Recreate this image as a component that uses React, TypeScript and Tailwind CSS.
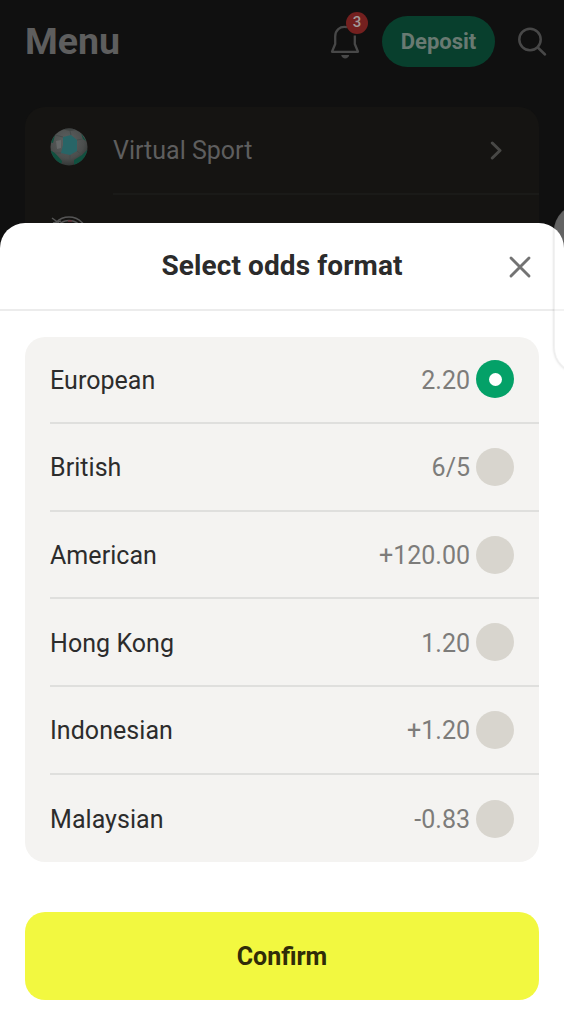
import { useState } from "react";

const formats = [
  { name: "European", sample: "2.20" },
  { name: "British", sample: "6/5" },
  { name: "American", sample: "+120.00" },
  { name: "Hong Kong", sample: "1.20" },
  { name: "Indonesian", sample: "+1.20" },
  { name: "Malaysian", sample: "-0.83" },
];

function Bell() {
  return (
    <svg className="block h-[36px] w-[32px]" viewBox="0 0 32 36" fill="none" stroke="#484848" strokeWidth="2.3">
      <path d="M18 3.2C10.500 1.800 6.200 6.400 6.200 12.500V20L3 27.800H29L25.800 20V11.500" strokeLinejoin="round" />
      <path d="M12.200 31H20.200C19.500 35.600 12.900 35.600 12.200 31Z" fill="#484848" stroke="none" />
    </svg>
  );
}

function Ball() {
  return (
    <svg className="block size-[38px]" viewBox="0 0 38 38">
      <defs>
        <radialGradient id="shell" cx=".45" cy=".35" r=".65">
          <stop offset="0" stopColor="#5d6060" />
          <stop offset=".7" stopColor="#4b4e4d" />
          <stop offset="1" stopColor="#343837" />
        </radialGradient>
        <clipPath id="round"><circle cx="19" cy="19" r="18.500" /></clipPath>
      </defs>
      <circle cx="19" cy="19" r="18.500" fill="url(#shell)" />
      <g clipPath="url(#round)">
        <path d="M13 9L21 7L27 12L27 23L20 27L11 25L13 17Z" fill="#286567" />
        <path d="M0 22L5 25L12 33L11 38H0ZM38 21L32 27L24 32V38H38ZM0 14L5 7L3 15ZM31 5L36 13L33 11Z" fill="#10503f" />
        <path d="M11 1L20 3L27 2L21 0Z" fill="#404443" />
        <path d="M21 7L20 3M27 12L33 11M27 23L32 27M20 27V32M11 25L5 25M13 9L5 7" stroke="#454b4a" strokeWidth="1" />
        <path d="M6 13L11 12L11 20L7 21Z" fill="#656868" />
      </g>
    </svg>
  );
}

export default function App() {
  const [selected, setSelected] = useState("European");
  return (
    <div className="relative flex h-[1024px] w-[564px] flex-col overflow-hidden bg-[#101010] font-['Roboto',sans-serif]">
      <header className="flex h-[107px] shrink-0 items-start pl-[25px] pr-[17px] text-[#5e5e5e]">
        <h1 className="mt-[18px] text-[37.500px] font-bold leading-[46px]">Menu</h1>
        <div className="ml-auto flex items-center pt-4">
          <div className="relative mr-[21px]">
            <Bell />
            <span className="absolute -top-[12px] left-[17px] flex size-[22px] items-center justify-center rounded-full bg-[#74201f] text-[15px] font-medium leading-none text-[#a29a9a]">3</span>
          </div>
          <button className="h-[51px] w-[113px] rounded-full bg-[#083f2d] text-[22px] font-bold text-[#697a72]">Deposit</button>
          <svg className="ml-[22px] block size-[30px]" viewBox="0 0 30 30" fill="none" stroke="#484848" strokeWidth="2.500" strokeLinecap="round">
            <circle cx="13" cy="12.500" r="10.700" />
            <path d="M20.800 20.500L28 27.500" />
          </svg>
        </div>
      </header>

      <section className="mx-[25px] h-[116px] shrink-0 overflow-hidden rounded-t-[20px] bg-[#151412]">
        <div className="flex h-[88px] items-center pl-[25px]">
          <div className="-mt-[8px]"><Ball /></div>
          <div className="ml-[25px] flex h-full flex-1 items-center border-b-2 border-[#1a1a18] pr-[36px]">
            <span className="pt-px text-[25px] text-[#5e5e5e]">Virtual Sport</span>
            <svg className="ml-auto block h-[19px] w-[13px]" viewBox="0 0 13 19" fill="none" stroke="#484846" strokeWidth="3" strokeLinecap="round" strokeLinejoin="round">
              <path d="M2.300 2L10 9.500L2.300 17" />
            </svg>
          </div>
        </div>
        <svg className="ml-[25px] mt-[21px] block h-[38px] w-[38px]" viewBox="0 0 38 38" fill="none" stroke="#555" strokeWidth="1.500">
          <circle cx="19" cy="19" r="18" />
          <circle cx="19" cy="19" r="14.500" />
          <path d="M2 2L9 7M3 7L11 5" />
          <path d="M18 5H22" stroke="#67333b" />
        </svg>
      </section>

      <main className="flex flex-1 flex-col rounded-t-[25px] bg-white">
        <div className="grid h-[88px] shrink-0 grid-cols-[82px_1fr_82px] items-center border-b-2 border-[#ececec]">
          <h2 className="col-start-2 whitespace-nowrap text-center text-[28px] font-bold tracking-[0.1px] text-[#2b2b2b]">Select odds format</h2>
          <button aria-label="Close" className="ml-[26px] mt-[2px] flex size-[24px] items-center justify-center">
            <svg className="size-[24px]" viewBox="0 0 24 24" stroke="#737373" strokeWidth="2.900" strokeLinecap="round">
              <path d="M3 3L21 21M21 3L3 21" />
            </svg>
          </button>
        </div>

        <div className="mx-[25px] mt-[26px] h-[525px] shrink-0 rounded-[20px] bg-[#f4f3f1] pl-[25px]">
          {formats.map((format) => (
            <button
              key={format.name}
              onClick={() => setSelected(format.name)}
              className="flex h-[87.800px] w-full items-center border-b-2 border-[#dfdfdd] pr-[25px] text-left text-[25px] first:h-[86.900px] last:border-b-0"
            >
              <span className="pt-[2px] tracking-[0.05px] text-[#2c2c2c]">{format.name}</span>
              <span className="ml-auto pt-[2px] text-[#7d7c7a]">{format.sample}</span>
              <span className={selected === format.name ? "ml-[6px] flex size-[38px] items-center justify-center rounded-full bg-[#04a168]" : "ml-[6px] flex size-[38px] items-center justify-center rounded-full bg-[#d8d5ce]"}>
                {selected === format.name && <span className="size-[13px] rounded-full bg-white" />}
              </span>
            </button>
          ))}
        </div>

        <button className="mx-[25px] mt-[50.400px] h-[87.600px] shrink-0 rounded-[20px] bg-[#f2f840] pt-[2px] text-[25px] font-bold text-[#302c08]">Confirm</button>
      </main>

      <div className="pointer-events-none absolute -right-[41px] top-[205px] h-[168px] w-[51px] rounded-[26px] border border-black/5 bg-white/35 shadow-[0_0_3px_rgba(0,0,0,0.2)]" />
    </div>
  );
}
